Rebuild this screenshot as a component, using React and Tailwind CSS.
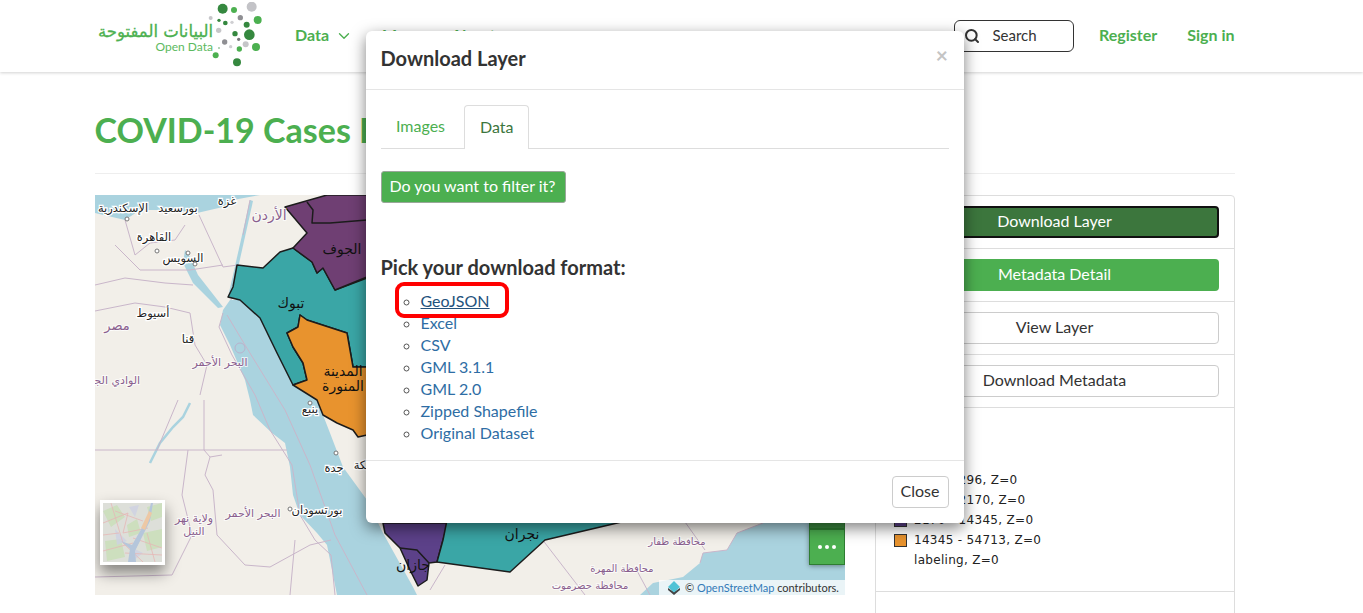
import { ChevronDown, Search } from 'lucide-react'

const FORMATS = ['Excel', 'CSV', 'GML 3.1.1', 'GML 2.0', 'Zipped Shapefile', 'Original Dataset']

const LEGEND = [
  { color: '#3aa6a6', label: '136 - 1296, Z=0' },
  { color: '#6f3f73', label: '1296 - 2170, Z=0' },
  { color: '#5c4189', label: '2170 - 14345, Z=0' },
  { color: '#e8932e', label: '14345 - 54713, Z=0' },
  { color: null, label: 'labeling, Z=0' },
]

const DOTS = [
  [428, 20, 15, '#35883f'], [462, 24, 9, '#4cb050'], [515, 14, 15, '#c3c3c7'], [392, 48, 6, '#c6c6c9'],
  [417, 55, 5, '#35883f'], [436, 63, 7, '#35883f'], [456, 61, 5, '#cfcfd2'], [481, 47, 8, '#8f8f93'],
  [533, 54, 12, '#4cb050'], [500, 68, 9, '#35883f'], [416, 85, 8, '#c6c6c9'], [465, 95, 8, '#35883f'],
  [508, 98, 16, '#35883f'], [476, 112, 5, '#77777b'], [434, 120, 8, '#8f8f93'], [452, 134, 5, '#cfcfd2'],
  [497, 127, 9, '#c6c6c9'], [528, 135, 12, '#4cb050'], [478, 141, 8, '#4cb050'], [417, 138, 2, '#35883f'],
  [407, 160, 9, '#4cb050'], [471, 181, 12, '#35883f'],
]

// x, y, text
const LABELS = [
  [28, 17, 'الإسكندرية'], [83, 17, 'بورسعيد'], [132, 10, 'غزة'], [59, 46, 'القاهرة'],
  [88, 67, 'السويس'], [58, 122, 'أسيوط'], [93, 148, 'قنا'], [215, 218, 'ينبع'], [239, 277, 'جدة'],
  [222, 319, 'بورتسودان'], [268, 274, 'مكة'],
]
const COUNTRY_LABELS = [
  [174, 25, 'الأردن', 14], [22, 135, 'مصر', 13], [125, 171, 'البحر الأحمر', 11], [15, 189, 'الوادي الجديد', 11],
  [158, 322, 'البحر الأحمر', 11], [99, 327, 'ولاية نهر', 11], [99, 340, 'النيل', 11],
  [582, 350, 'محافظة ظفار', 10], [527, 377, 'محافظة المهرة', 10], [495, 394, 'محافظة حضرموت', 10],
]
const REGION_LABELS = [
  [247, 59, 'الجوف'], [196, 113, 'تبوك'], [248, 181, 'المدينة'], [248, 196, 'المنورة'], [318, 375, 'جازان'], [427, 344, 'نجران'],
]
const BORDERS = [
  'M0 255H192', 'M109 205V255', 'M83 205L62 255', 'M93 255L87 300L97 340L77 380L0 382',
  'M109 255L115 262L127 260M115 262L110 280L118 295L122 340L150 370L175 372L215 350L236 345',
  'M0 116L40 108L70 112L95 118L100 150L112 170L105 200',
  'M128 72L143 70L136 105M128 72L104 20M148 40L155 5',
  'M30 25L40 60L55 48L80 45L90 30M20 50L45 75L75 75L95 75L128 70',
  'M0 90L30 83L70 88L98 90',
  'M132 120L150 150L190 215L215 270L240 340L272 400',
  'M128 118L124 132L137 160L160 200L175 235L197 270L205 320L220 345L236 360L240 400',
  'M200 345L195 400M335 395L350 370M490 400L440 335M585 320L610 355M555 400L540 372',
  'M605 368L608 358L632 355L642 338L668 328',
]

function MapDrawing() {
  return (
    <svg viewBox="0 0 750 400" className="block h-full w-full [font-family:'DejaVu_Sans',sans-serif]">
      <rect width="750" height="400" fill="#f2efe9" />
      {/* mediterranean */}
      <path d="M0 0H165L138 5L128 12L102 18L80 15L45 15L30 25L0 18Z" fill="#aad3df" />
      {/* red sea and gulfs */}
      <path d="M90 55L93 58L103 80L128 112L123 113L98 88L88 68Z" fill="#aad3df" />
      <path d="M155 5L158 6L137 100L133 102Z" fill="#aad3df" />
      <path d="M128 115L125 130L135 150L150 185L155 205L158 220L177 238L190 248L195 272L198 300L205 320L222 338L232 350L242 400H322L318 392L288 338L272 305L248 272L235 238L228 220L222 205L198 190L182 158L165 123L145 105L135 105Z" fill="#aad3df" />
      {/* lake nasser */}
      <path d="M95 208L88 222L78 232L65 248L55 268" fill="none" stroke="#aad3df" strokeWidth="2.5" />
      {/* arabian sea */}
      <path d="M545 400L558 388L588 382L605 368L608 358L632 355L642 338L668 328H750V400Z" fill="#aad3df" />
      {BORDERS.map((d) => (
        <path key={d} d={d} fill="none" stroke="#c9b6ca" strokeWidth="1" />
      ))}
      <circle cx="145" cy="153" r="5" fill="none" stroke="#b9b2cc" strokeWidth="1" />

      {/* regions */}
      <g stroke="#1c1c1c" strokeWidth="1.5" strokeLinejoin="round">
        <path d="M142 70L168 73L185 57L198 53L217 67L222 78L228 73L240 95L272 83V172H258L252 138L212 125L205 120L203 132L192 138L198 152L208 168L212 185L198 190L182 158L165 123L145 105L133 102L138 92Z" fill="#3aa6a6" />
        <path d="M190 12L232 0H272V82L240 95L228 73L222 78L217 67L198 53L212 38Z" fill="#6f3f73" />
        <path d="M212 7L218 15L217 28L235 28L272 25" fill="none" />
        <path d="M205 120L212 125L252 138L258 172H272V240L263 242L258 235L242 228L228 220L222 205L198 190L212 185L208 168L198 152L192 138L203 132Z" fill="#e8932e" />
        <path d="M288 328L290 338L305 353L315 375L323 391L332 385L334 368L342 367L348 345L353 328Z" fill="#5c4189" />
        <path d="M305 353L322 355L334 368" fill="none" />
        <path d="M342 367L415 377L450 345L535 325V320H353L348 345Z" fill="#3aa6a6" />
      </g>

      {LABELS.map(([x, y, t]) => (
        <text key={t} x={x} y={y} textAnchor="middle" fontSize="11.5" fill="#222" stroke="#fff" strokeWidth="2.5" paintOrder="stroke">{t}</text>
      ))}
      {COUNTRY_LABELS.map(([x, y, t, s]) => (
        <text key={`${t}${x}`} x={x} y={y} textAnchor="middle" fontSize={s} fill="#8a5f8e" stroke="#fff" strokeWidth="2" strokeOpacity="0.7" paintOrder="stroke">{t}</text>
      ))}
      {REGION_LABELS.map(([x, y, t]) => (
        <text key={t} x={x} y={y} textAnchor="middle" fontSize="14" fill="#111">{t}</text>
      ))}
      {[[100, 69], [62, 56], [93, 58], [195, 314], [241, 258], [215, 208], [32, 24]].map(([x, y]) => (
        <circle key={x} cx={x} cy={y} r="2" fill="#fff" stroke="#777" strokeWidth="1" />
      ))}
    </svg>
  )
}

function Thumbnail() {
  return (
    <svg viewBox="0 0 59 59" className="block h-full w-full opacity-80">
      <rect width="59" height="59" fill="#d9dcd6" />
      <path d="M0 8L14 2L22 14L8 24ZM24 22L34 16L38 30L26 34ZM40 30L59 26V44L44 48ZM2 38L18 36L22 54L4 58ZM44 4L59 0V14L48 18Z" fill="#bfdcae" opacity="0.85" />
      <path d="M12 26L24 38L14 42ZM26 4L36 2L32 14ZM28 44L40 50L30 58Z" fill="#c5cbe2" opacity="0.8" />
      <path d="M0 20L25 10L20 30L45 25M8 0L20 40L40 59M30 35L59 45M0 48L30 40M44 30L52 59M12 8L40 18M0 32L16 30M22 50L59 52" stroke="#e3a9a9" strokeWidth="0.8" fill="none" />
      <path d="M25 59L27 46L18 38L29 42L36 30L44 16L48 0L50 0L47 18L38 36L32 48L33 59Z" fill="#a7bcd8" />
      <path d="M38 25L46 8L49 10L42 27Z" fill="#ecbf95" />
    </svg>
  )
}

function Logo() {
  return (
    <svg viewBox="0 0 170 68" className="block h-[68px] w-[170px]">
      <text x="118" y="35" textAnchor="end" fontSize="16.5" fill="#4cb050" stroke="#4cb050" strokeWidth="0.3" className="[font-family:'DejaVu_Sans',sans-serif]">البيانات المفتوحة</text>
      <text x="118" y="49" textAnchor="end" fontSize="12" fill="#5cba60">Open Data</text>
      {DOTS.map(([x, y, r, c]) => (
        <circle key={`${x}-${y}`} cx={x / 3 - 15} cy={y / 3} r={r / 3} fill={c} />
      ))}
    </svg>
  )
}

function Navbar() {
  return (
    <header className="relative flex h-[72px] items-center bg-white pl-[95px] shadow-[0_1px_3px_rgba(0,0,0,0.18)]">
      <div className="flex w-[1140px] items-center">
        <Logo />
        <a className="ml-[30px] flex items-center gap-[6px] pb-[2px] font-bold text-[#4caf50]">
          Data <ChevronDown size={18} strokeWidth={1.8} className="mt-[2px]" />
        </a>
        <a className="ml-[29px] pb-[2px] font-bold text-[#4caf50]">Maps</a>
        <a className="ml-[30px] pb-[2px] font-bold text-[#4caf50]">About</a>
        <div className="ml-auto flex h-8 w-[120px] items-center gap-3 rounded-md border border-[#333] pb-[2px] pl-[9px] text-[#333]">
          <Search size={16} strokeWidth={3} className="mt-[2px]" />
          <span className="text-[15px]">Search</span>
        </div>
        <a className="ml-[24.5px] pb-[2px] font-bold text-[#4caf50]">Register</a>
        <a className="mr-[0.5px] ml-[30px] pb-[2px] font-bold text-[#4caf50]">Sign in</a>
      </div>
    </header>
  )
}

function SideButton({ className, children }) {
  return (
    <div className="border-b border-[#ddd] px-[15px] py-[10px]">
      <button type="button" className={`block h-8 w-full rounded pr-[1px] pb-[2px] text-center text-base ${className}`}>
        {children}
      </button>
    </div>
  )
}

function Sidebar() {
  return (
    <aside className="h-[430px] w-[360px] shrink-0 rounded-t border border-[#ddd]">
      <SideButton className="border-2 border-[#111] bg-[#3c763d] text-white">Download Layer</SideButton>
      <SideButton className="bg-[#4caf50] text-white">Metadata Detail</SideButton>
      <SideButton className="border border-[#ccc] bg-white text-[#333]">View Layer</SideButton>
      <SideButton className="border border-[#ccc] bg-white text-[#333]">Download Metadata</SideButton>
      <div className="flex h-[184px] flex-col border-b border-[#ddd] pt-[62px] pl-[18px] [font-family:'DejaVu_Sans',sans-serif] text-xs text-[#222]">
        {LEGEND.map((row) => (
          <div key={row.label} className="flex h-5 items-center gap-[7px]">
            <span
              className={`h-[13px] w-[13px] border ${row.color ? 'border-[#333]' : 'border-transparent'}`}
              style={{ background: row.color || 'transparent' }}
            />
            <span className="tracking-[0.3px]">{row.label}</span>
          </div>
        ))}
      </div>
    </aside>
  )
}

function MapPanel() {
  return (
    <div className="relative h-[400px] w-[750px] shrink-0 overflow-hidden">
      <MapDrawing />
      <div className="absolute bottom-[30px] left-[5px] h-[65px] w-[65px] border-[3px] border-white shadow-[0_8px_14px_rgba(0,0,0,0.45)]">
        <Thumbnail />
      </div>
      <div className="absolute right-0 bottom-[30px] w-9 shadow-[0_1px_5px_rgba(0,0,0,0.4)]">
        <div className="h-[6px] border border-t-0 border-[#2e7d32] bg-[#3c8b40]" />
        <div className="flex h-9 items-center justify-center gap-[3px] border border-[#2e7d32] bg-[#4caf50]">
          <i className="h-1 w-1 rounded-full bg-white" />
          <i className="h-1 w-1 rounded-full bg-white" />
          <i className="h-1 w-1 rounded-full bg-white" />
        </div>
      </div>
      <div className="absolute right-0 bottom-0 flex h-[15px] w-[186px] items-center gap-1 bg-white/75 pl-2 text-[11px] leading-none text-[#333]">
        <svg viewBox="0 0 14 14" className="h-[14px] w-[14px] shrink-0">
          <path d="M7 11L13 7V9L7 14L1 9V7Z" fill="#444" />
          <path d="M7 0L13 6L7 11.5L1 6Z" fill="#4fc3d6" />
        </svg>
        <span>© <span className="text-[#337ab7]">OpenStreetMap</span> contributors.</span>
      </div>
    </div>
  )
}

function DownloadModal() {
  return (
    <div className="absolute top-[31px] left-[366px] h-[492px] w-[598px] rounded-md bg-white text-[#333] shadow-[0_5px_15px_rgba(0,0,0,0.5)]">
      <div className="flex h-[59px] items-center justify-between border-b border-[#e5e5e5] pr-[15px] pb-[4px] pl-[14.5px]">
        <h4 className="text-xl font-bold">Download Layer</h4>
        <span className="mr-[1px] mb-[6px] text-[21px] font-bold text-[#c4c4c4]">×</span>
      </div>
      <div className="px-[15px] pt-[15px]">
        <div className="flex h-[44px] border-b border-[#ddd]">
          <a className="px-[15px] pt-[9px] text-[#4caf50]">Images</a>
          <a className="ml-[4px] h-[44px] w-[65px] rounded-t border border-b-0 border-[#ddd] bg-white pt-[9px] pl-[15px] text-[#3c763d]">Data</a>
        </div>
        <button type="button" className="mt-[22px] block h-8 w-[185px] rounded-[3px] border border-[#9aa79a] bg-[#4caf50] pr-[2px] pb-[2px] text-base text-white">
          Do you want to filter it?
        </button>
        <h4 className="mt-[50px] -ml-[0.5px] text-xl leading-[28px] font-bold">Pick your download format:</h4>
        <ul className="relative mt-[9px] list-[circle] pl-[39.5px] leading-[22px] text-[#2e6da4] marker:text-[#555]">
          <li><a className="text-[#23527c] underline">GeoJSON</a></li>
          {FORMATS.map((f) => (
            <li key={f}><a>{f}</a></li>
          ))}
          <div className="absolute top-[-8px] left-[14px] h-[36px] w-[114px] rounded-[9px] border-4 border-[#f00]" />
        </ul>
      </div>
      <div className="absolute right-0 bottom-0 left-0 flex h-[63px] items-center justify-end border-t border-[#e5e5e5] px-[15px]">
        <button type="button" className="h-8 w-[57px] rounded border border-[#ccc] bg-white pr-[1px] pb-[2px] text-base text-[#333]">Close</button>
      </div>
    </div>
  )
}

export default function App() {
  return (
    <div className="relative h-[613px] w-[1363px] overflow-hidden bg-white [font-family:Lato,sans-serif] text-base">
      <Navbar />
      <main className="pl-[95px]">
        <div className="w-[1140px]">
          <h1 className="mt-[37px] -ml-[0.5px] border-b border-[#eee] pb-[23px] text-[34px] leading-[41px] font-bold text-[#4caf50]">
            COVID-19 Cases By Region
          </h1>
          <div className="mt-[21px] flex gap-[30px]">
            <MapPanel />
            <Sidebar />
          </div>
        </div>
      </main>
      <DownloadModal />
    </div>
  )
}
